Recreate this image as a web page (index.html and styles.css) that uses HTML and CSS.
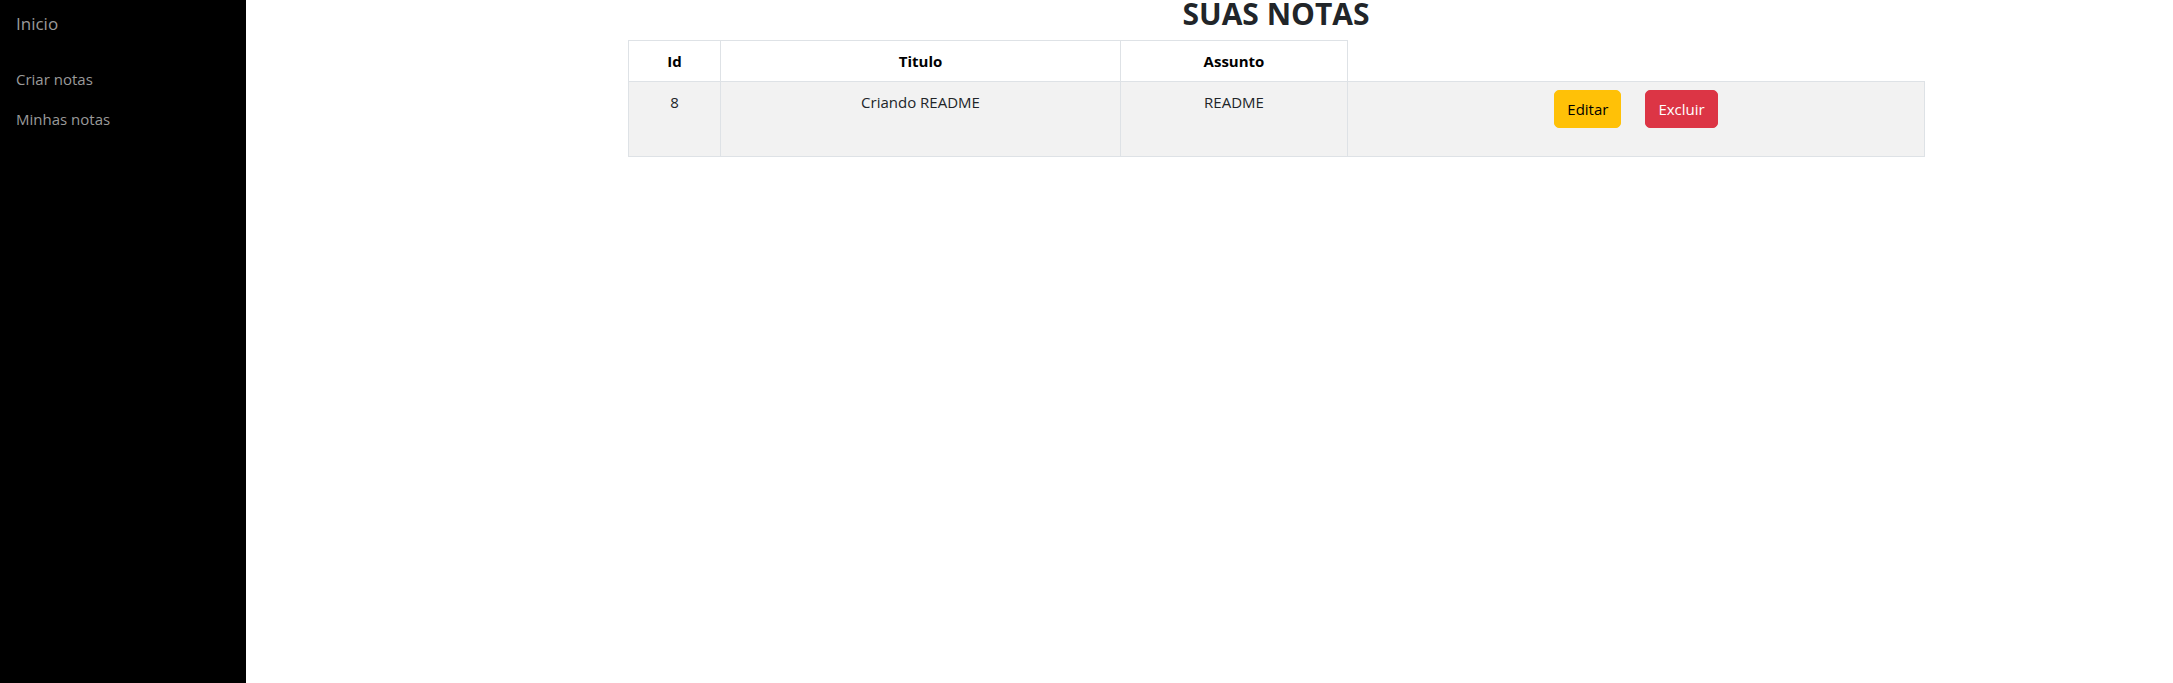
FILE: index.html
```html
<!DOCTYPE html>
<html lang="pt-BR">
<head>
<meta charset="utf-8">
<title>Suas notas</title>
<link rel="stylesheet" href="styles.css">
</head>
<body>
<div class="layout">
  <nav class="sidebar">
    <a class="brand" href="#">Inicio</a>
    <ul class="nav">
      <li><a class="nav-link" href="#">Criar notas</a></li>
      <li><a class="nav-link" href="#">Minhas notas</a></li>
    </ul>
  </nav>
  <main class="main">
    <div class="content">
      <h1 class="title">SUAS NOTAS</h1>
      <table class="notes">
        <colgroup>
          <col class="c-id">
          <col class="c-title">
          <col class="c-subject">
          <col class="c-actions">
        </colgroup>
        <thead>
          <tr>
            <th>Id</th>
            <th>Titulo</th>
            <th>Assunto</th>
            <th class="empty"></th>
          </tr>
        </thead>
        <tbody>
          <tr class="striped">
            <td>8</td>
            <td>Criando README</td>
            <td>README</td>
            <td>
              <div class="actions">
                <button class="btn btn-warning" type="button">Editar</button>
                <button class="btn btn-danger" type="button">Excluir</button>
              </div>
            </td>
          </tr>
        </tbody>
      </table>
    </div>
  </main>
</div>
</body>
</html>
```

FILE: styles.css
```css
* {
  box-sizing: border-box;
}

html, body {
  margin: 0;
  height: 100%;
}

body {
  font-family: "Open Sans", "Noto Sans", sans-serif;
  font-size: 15px;
  color: #212529;
  background: #fff;
}

.layout {
  display: flex;
  min-height: 100%;
}

.sidebar {
  width: 246px;
  flex: 0 0 246px;
  background: #000;
  padding: 9px 16px 0 16px;
}

.brand {
  display: block;
  font-size: 17px;
  line-height: 30px;
  color: #9a9a9a;
  text-decoration: none;
  margin-bottom: 20px;
}

.nav {
  list-style: none;
  margin: 0;
  padding: 0;
}

.nav-link {
  display: block;
  padding: 8px 0;
  line-height: 24px;
  font-size: 15px;
  color: #9a9a9a;
  text-decoration: none;
}

.main {
  flex: 1;
}

.content {
  width: 1296px;
  margin-left: 382px;
}

.title {
  margin: 0 0 12px 0;
  font-size: 30px;
  line-height: 28px;
  font-weight: 700;
  text-align: center;
  color: #212529;
}

.notes {
  width: 1296px;
  border-collapse: collapse;
  table-layout: fixed;
}

.c-id { width: 92px; }
.c-title { width: 400px; }
.c-subject { width: 227px; }
.c-actions { width: 577px; }

.notes th,
.notes td {
  border: 1px solid #dee2e6;
  padding: 8px;
  line-height: 24px;
  text-align: center;
  vertical-align: top;
}

.notes th {
  font-weight: 700;
  color: #000;
}

.notes th.empty {
  border-top: none;
  border-right: none;
}

.striped td {
  background: #f2f2f2;
}

.actions {
  display: flex;
  justify-content: center;
  gap: 24px;
  padding-bottom: 20px;
}

.btn {
  font-family: inherit;
  font-size: 15px;
  line-height: 24px;
  padding: 6px 12px;
  border: 1px solid transparent;
  border-radius: 5px;
  cursor: pointer;
}

.btn-warning {
  background: #ffc107;
  border-color: #ffc107;
  color: #000;
}

.btn-danger {
  background: #dc3545;
  border-color: #dc3545;
  color: #fff;
}
```
